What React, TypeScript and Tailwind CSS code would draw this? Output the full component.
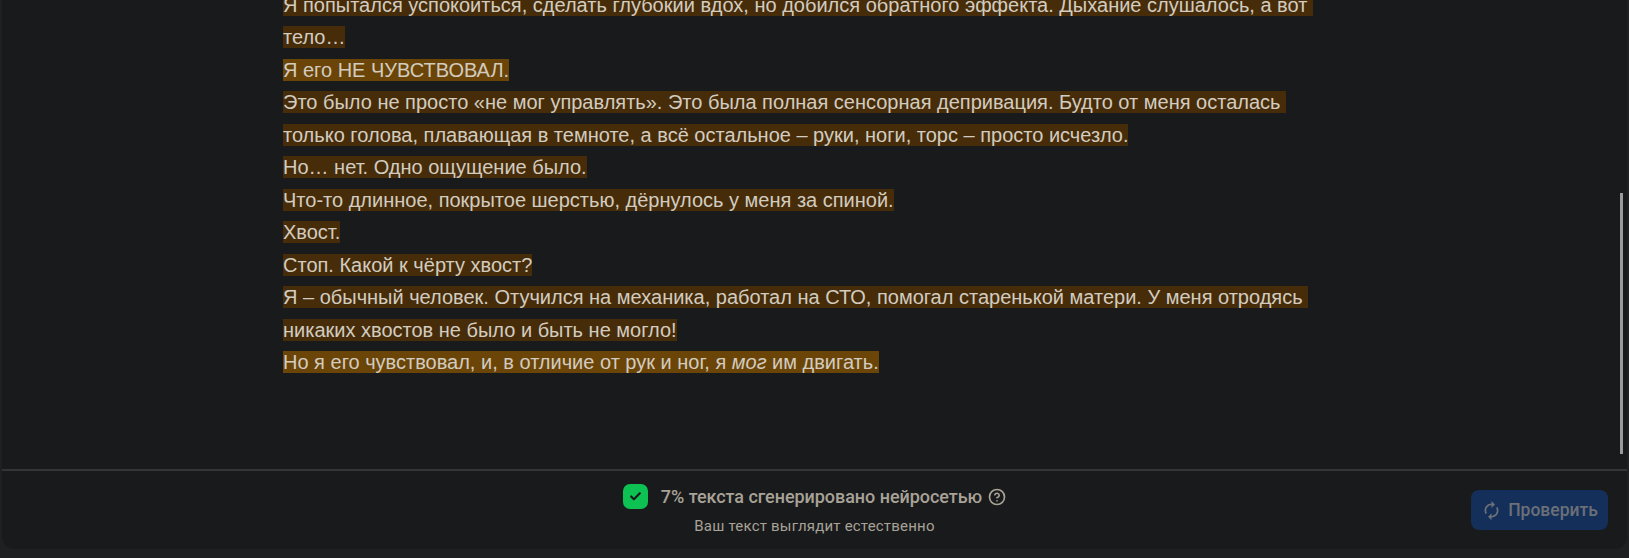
import { CircleHelp, Check } from 'lucide-react';

const lines: { text: React.ReactNode; strong?: boolean }[] = [
  { text: 'Я попытался успокоиться, сделать глубокий вдох, но добился обратного эффекта. Дыхание слушалось, а вот тело…' },
  { text: 'Я его НЕ ЧУВСТВОВАЛ.', strong: true },
  { text: 'Это было не просто «не мог управлять». Это была полная сенсорная депривация. Будто от меня осталась только голова, плавающая в темноте, а всё остальное – руки, ноги, торс – просто исчезло.' },
  { text: 'Но… нет. Одно ощущение было.' },
  { text: 'Что-то длинное, покрытое шерстью, дёрнулось у меня за спиной.' },
  { text: 'Хвост.' },
  { text: 'Стоп. Какой к чёрту хвост?' },
  { text: 'Я – обычный человек. Отучился на механика, работал на СТО, помогал старенькой матери. У меня отродясь никаких хвостов не было и быть не могло!' },
  {
    text: (
      <>
        Но я его чувствовал, и, в отличие от рук и ног, я <em>мог</em> им двигать.
      </>
    ),
    strong: true,
  },
];

export default function App() {
  return (
    <div className="h-[558px] overflow-hidden bg-[#1f2022] pl-[2px] pr-[2px] pb-[9px] font-['Liberation_Sans',sans-serif]">
      <div className="relative flex h-full flex-col overflow-hidden rounded-b-xl bg-[#191a1c]">
        <div className="h-[469px] shrink-0 overflow-hidden pl-[281px]">
          <div className="-mt-[11.25px] w-[1040px] text-[20px] leading-[32.5px] text-[#d2ccc0]">
            {lines.map((line, i) => (
              <p key={i} className="whitespace-pre-wrap">
                <span className={line.strong ? 'bg-[#6b4507]' : 'bg-[#472c0a]'}>{line.text}</span>
              </p>
            ))}
          </div>
        </div>
        <div className="absolute right-[4px] top-[193px] h-[261px] w-[3px] bg-[#9a9a9a]" />
        <div className="flex flex-1 items-start justify-center border-t-2 border-[#333537] font-['Roboto',sans-serif]">
          <div className="flex flex-col items-center pt-[12px]">
            <div className="flex items-center">
              <span className="flex h-[25px] w-[25px] items-center justify-center rounded-[7px] bg-[#0dc253]">
                <Check className="h-[13px] w-[13px] text-[#1a1c1e]" strokeWidth={4} />
              </span>
              <span className="ml-[13px] text-[18px] font-medium tracking-[-0.05px] text-[#a8a297]">7% текста сгенерировано нейросетью</span>
              <CircleHelp className="ml-[6px] h-[18px] w-[18px] text-[#a8a297]" strokeWidth={2.25} />
            </div>
            <p className="mt-[5px] text-[15px] tracking-[0.2px] text-[#a8a297]">Ваш текст выглядит естественно</p>
          </div>
        </div>
        <button className="absolute bottom-[19px] right-[19px] flex h-[40px] w-[137px] items-center justify-center gap-[6px] rounded-lg bg-[#142f59] font-['Roboto',sans-serif] text-[17.5px] font-medium text-[#6b7078]">
          <svg viewBox="0 0 24 24" className="h-[21px] w-[21px] -scale-x-100 fill-current">
            <path d="M12 4V1L8 5l4 4V6c3.31 0 6 2.69 6 6 0 1.01-.25 1.97-.7 2.8l1.46 1.46C19.54 15.03 20 13.57 20 12c0-4.42-3.58-8-8-8zm0 14c-3.31 0-6-2.69-6-6 0-1.01.25-1.97.7-2.8L5.24 7.74C4.46 8.97 4 10.43 4 12c0 4.42 3.58 8 8 8v3l4-4-4-4v3z" />
          </svg>
          Проверить
        </button>
      </div>
    </div>
  );
}
